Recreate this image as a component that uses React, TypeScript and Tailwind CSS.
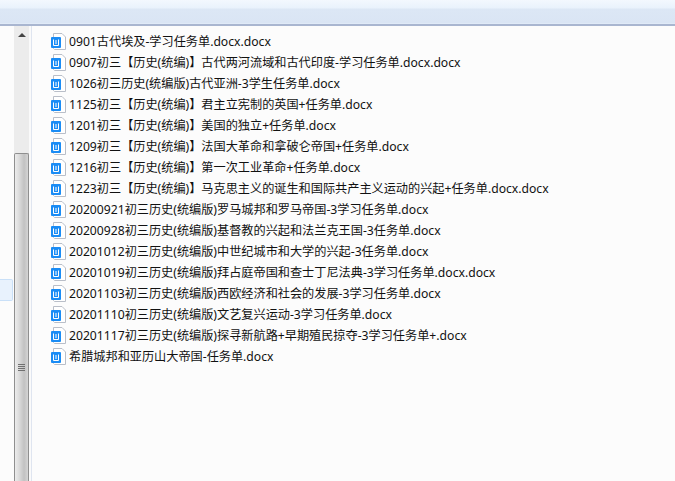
const files = [
  '0901古代埃及-学习任务单.docx.docx',
  '0907初三【历史(统编)】古代两河流域和古代印度-学习任务单.docx.docx',
  '1026初三历史(统编版)古代亚洲-3学生任务单.docx',
  '1125初三【历史(统编)】君主立宪制的英国+任务单.docx',
  '1201初三【历史(统编)】美国的独立+任务单.docx',
  '1209初三【历史(统编)】法国大革命和拿破仑帝国+任务单.docx',
  '1216初三【历史(统编)】第一次工业革命+任务单.docx',
  '1223初三【历史(统编)】马克思主义的诞生和国际共产主义运动的兴起+任务单.docx.docx',
  '20200921初三历史(统编版)罗马城邦和罗马帝国-3学习任务单.docx',
  '20200928初三历史(统编版)基督教的兴起和法兰克王国-3任务单.docx',
  '20201012初三历史(统编版)中世纪城市和大学的兴起-3任务单.docx',
  '20201019初三历史(统编版)拜占庭帝国和查士丁尼法典-3学习任务单.docx.docx',
  '20201103初三历史(统编版)西欧经济和社会的发展-3学习任务单.docx',
  '20201110初三历史(统编版)文艺复兴运动-3学习任务单.docx',
  '20201117初三历史(统编版)探寻新航路+早期殖民掠夺-3学习任务单+.docx',
  '希腊城邦和亚历山大帝国-任务单.docx',
];

function DocIcon() {
  return (
    <svg width="16" height="17" viewBox="0 0 16 17" className="shrink-0">
      <path d="M2.5 0.5H11L14.5 4V16.5H3.5L2.5 15.5Z" fill="#ffffff" stroke="#b9bec8" />
      <rect x="0" y="4" width="10" height="11" rx="1" fill="#1a8cf5" />
      <path d="M2.5 6.5V12.5H7.5V6.5" fill="none" stroke="#ffffff" strokeWidth="1" />
      <path d="M5 7V11" fill="none" stroke="#ffffff" strokeWidth="1" />
    </svg>
  );
}

export default function App() {
  return (
    <div className="flex h-[481px] w-[675px] flex-col overflow-hidden bg-[#fcfcfc] font-['Noto_Sans','Noto_Sans_CJK_SC',sans-serif] text-[12.16px] text-[#111111]">
      {/* Toolbar */}
      <div className="h-[26px] shrink-0 border-b-2 border-[#a9b6d0] bg-[linear-gradient(to_bottom,#f3f8fe_0,#e9f2fc_8px,#dce7f5_9px,#dae5f4_23px,#e6effa_24px)]" />

      <div className="flex min-h-0 flex-1">
        {/* Nav pane */}
        <div className="flex w-[14px] shrink-0 flex-col pr-px pt-[253px]">
          <div className="h-[22px] rounded-r-[2px] border border-l-0 border-[#c9e0f8] bg-[#e8f2fd]" />
        </div>

        {/* Scrollbar */}
        <div className="flex w-[15px] shrink-0 flex-col bg-[#ececec]">
          <div className="flex h-[127px] items-start justify-center pt-[7px]">
            <div className="h-0 w-0 border-x-[4px] border-b-[4px] border-x-transparent border-b-[#444444]" />
          </div>
          <div className="flex flex-1 items-start justify-center rounded-t-[2px] border border-b-0 border-[#8f8f8f] bg-[linear-gradient(to_right,#ececec,#dcdcdc_30%,#c2c2c2_70%,#d4d4d4)] pt-[210px]">
            <div className="flex w-[7px] flex-col gap-px">
              <div className="h-px bg-[#707070]" />
              <div className="h-px bg-[#707070]" />
              <div className="h-px bg-[#707070]" />
              <div className="h-px bg-[#707070]" />
            </div>
          </div>
        </div>

        {/* Divider */}
        <div className="w-[3px] shrink-0 border-r border-[#dfe5f0] bg-[#fafafa]" />

        {/* File list */}
        <div className="flex min-w-0 flex-1 flex-col pl-[19px] pt-[5px]">
          {files.map((name) => (
            <div key={name} className="flex h-[21px] items-center gap-[2px] whitespace-nowrap">
              <DocIcon />
              <span className="leading-[21px]">{name}</span>
            </div>
          ))}
        </div>
      </div>
    </div>
  );
}
